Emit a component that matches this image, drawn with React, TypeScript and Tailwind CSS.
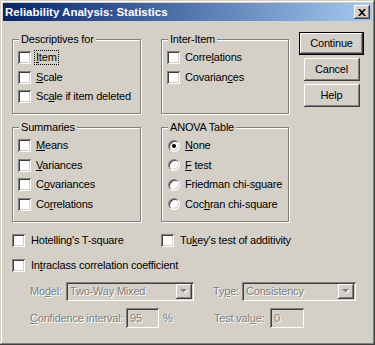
import React from 'react';

const raised =
    'shadow-[inset_-1px_-1px_0_#404040,inset_1px_1px_0_#ffffff,inset_-2px_-2px_0_#808080,inset_2px_2px_0_#d4d0c8]';
const sunken =
    'shadow-[inset_1px_1px_0_#808080,inset_-1px_-1px_0_#ffffff,inset_2px_2px_0_#404040,inset_-2px_-2px_0_#d4d0c8]';
const dim = 'whitespace-nowrap text-[#808080] [text-shadow:1px_1px_0_#ffffff]';

const Check = () => <span className={`block w-[13px] h-[13px] shrink-0 bg-white ${sunken}`} />;

const Radio = ({ on }: { on?: boolean }) => (
    <span className="flex w-[13px] h-[13px] shrink-0 items-center">
        <span className="ml-[1px] flex w-[12px] h-[12px] items-center justify-center rounded-full border border-t-[#808080] border-l-[#808080] border-r-white border-b-white bg-white shadow-[inset_1px_1px_0_#404040,inset_-1px_-1px_0_#d4d0c8]">
            {on && <span className="block w-[4px] h-[4px] rounded-full bg-black" />}
        </span>
    </span>
);

const Row = ({ children, radio, on }: { children: React.ReactNode; radio?: boolean; on?: boolean }) => (
    <div className="flex h-[19.5px] items-center gap-[5px]">
        {radio ? <Radio on={on} /> : <Check />}
        <span className="leading-[13px] whitespace-nowrap">{children}</span>
    </div>
);

const Group = ({ title, children, className }: { title: string; children: React.ReactNode; className: string }) => (
    <div className={`relative border border-[#808080] shadow-[inset_1px_1px_0_#ffffff,1px_1px_0_#ffffff] pl-[5px] pt-[8px] ${className}`}>
        <span className="absolute left-[6px] top-[-7px] bg-[#d4d0c8] px-[2px] leading-[13px] whitespace-nowrap">{title}</span>
        {children}
    </div>
);

const Button = ({ label, def }: { label: string; def?: boolean }) => (
    <div className={`h-[23px] ${def ? 'w-[65px] border border-black' : 'w-[56px]'}`}>
        <div className={`flex h-full items-center justify-center ${raised}`}>{label}</div>
    </div>
);

const Combo = ({ value, width }: { value: string; width: string }) => (
    <div className={`flex h-[19px] items-center justify-between bg-[#d4d0c8] pl-[4px] pr-[2px] ${sunken} ${width}`}>
        <span className={dim}>{value}</span>
        <span className={`flex w-[16px] h-[15px] items-center justify-center ${raised}`}>
            <svg width="8" height="5" viewBox="0 0 8 5">
                <path d="M1 1h7L4.5 4.5z" fill="#ffffff" />
                <path d="M0 0h7L3.5 3.5z" fill="#808080" />
            </svg>
        </span>
    </div>
);

const Field = ({ value, width }: { value: string; width: string }) => (
    <div className={`flex h-[20px] items-center bg-[#d4d0c8] pl-[4px] ${sunken} ${width}`}>
        <span className={dim}>{value}</span>
    </div>
);

const App: React.FC = () => {
    return (
        <div className="w-[375px] h-[345px] bg-[#d4d0c8] p-[3px] text-[11px] tracking-[-0.2px] text-black font-['Liberation_Sans',Arial,sans-serif] shadow-[inset_-1px_-1px_0_#404040,inset_1px_1px_0_#d4d0c8,inset_-2px_-2px_0_#808080,inset_2px_2px_0_#ffffff]">
            <div className="flex h-[18px] items-center justify-between bg-linear-to-r from-[#0a246a] to-[#a6caf0] pl-[2px] pr-[2px]">
                <span className="text-[11.5px] font-bold tracking-normal text-white leading-[14px]">Reliability Analysis: Statistics</span>
                <span className={`flex w-[16px] h-[14px] items-center justify-center bg-[#d4d0c8] ${raised}`}>
                    <svg width="8" height="7" viewBox="0 0 8 7">
                        <path d="M0 0h2l2 2.2L6 0h2L5 3.5 8 7H6L4 4.8 2 7H0l3-3.5z" fill="#000000" />
                    </svg>
                </span>
            </div>

            <div className="flex pt-[11px] pl-[9px]">
                <div className="mt-[7px] grid grid-cols-[129px_128px] gap-x-[20px] gap-y-[13px]">
                    <Group title="Descriptives for" className="h-[75px]">
                        <div className="flex h-[19.5px] items-center gap-[5px]">
                            <Check />
                            <span className="-ml-[1px] px-[1px] leading-[13px] outline-1 outline-dotted outline-black">
                                <u>I</u>tem
                            </span>
                        </div>
                        <Row><u>S</u>cale</Row>
                        <Row>Sc<u>a</u>le if item deleted</Row>
                    </Group>
                    <Group title="Inter-Item" className="h-[75px]">
                        <Row>Corre<u>l</u>ations</Row>
                        <Row>Covarian<u>c</u>es</Row>
                    </Group>
                    <Group title="Summaries" className="h-[95px]">
                        <Row><u>M</u>eans</Row>
                        <Row><u>V</u>ariances</Row>
                        <Row>C<u>o</u>variances</Row>
                        <Row>Co<u>r</u>relations</Row>
                    </Group>
                    <Group title="ANOVA Table" className="h-[95px]">
                        <Row radio on><u>N</u>one</Row>
                        <Row radio><u>F</u> test</Row>
                        <Row radio>Friedman chi-s<u>q</u>uare</Row>
                        <Row radio>Coc<u>h</u>ran chi-square</Row>
                    </Group>
                </div>
                <div className="ml-[10px] flex w-[65px] flex-col items-center gap-[3px]">
                    <Button label="Continue" def />
                    <Button label="Cancel" />
                    <Button label="Help" />
                </div>
            </div>

            <div className="pl-[9px]">
                <div className="mt-[12px] flex h-[13px] items-center">
                    <div className="flex w-[149px] items-center gap-[6px]">
                        <Check />
                        <span className="leading-[13px] whitespace-nowrap">Hotelling's T-square</span>
                    </div>
                    <div className="flex items-center gap-[6px]">
                        <Check />
                        <span className="leading-[13px] whitespace-nowrap">Tu<u>k</u>ey's test of additivity</span>
                    </div>
                </div>
                <div className="mt-[12px] flex h-[13px] items-center gap-[6px]">
                    <Check />
                    <span className="leading-[13px] whitespace-nowrap">In<u>t</u>raclass correlation coefficient</span>
                </div>
            </div>

            <div className="pl-[27px]">
                <div className="mt-[10px] flex items-center">
                    <span className={`w-[36px] shrink-0 ${dim}`}>Mo<u>d</u>el:</span>
                    <Combo value="Two-Way Mixed" width="w-[128px] shrink-0" />
                    <span className={`ml-[19px] w-[29px] shrink-0 ${dim}`}>Ty<u>p</u>e:</span>
                    <Combo value="Consistency" width="w-[114px] shrink-0" />
                </div>
                <div className="mt-[7px] flex items-center">
                    <span className={`w-[96px] shrink-0 ${dim}`}><u>C</u>onfidence interval:</span>
                    <Field value="95" width="w-[33px] shrink-0" />
                    <span className={`ml-[4px] w-[51px] shrink-0 ${dim}`}>%</span>
                    <span className={`w-[56px] shrink-0 ${dim}`}>Test val<u>u</u>e:</span>
                    <Field value="0" width="w-[34px] shrink-0" />
                </div>
            </div>
        </div>
    );
};

export default App;
